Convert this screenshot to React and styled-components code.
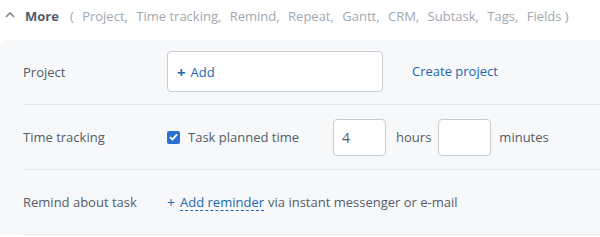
import React from "react";
import styled, { createGlobalStyle } from "styled-components";

const Global = createGlobalStyle`
  html, body { margin: 0; padding: 0; background: #fff; }
  body { font-family: "Open Sans", "Liberation Sans", sans-serif; font-size: 13px; color: #535c69; }
  * { box-sizing: border-box; }
`;

const Wrap = styled.div`
  width: 600px;
  height: 237px;
  overflow: hidden;
`;

const Header = styled.div`
  height: 40px;
  display: flex;
  align-items: center;
  padding-left: 5px;
  padding-bottom: 11px;
  padding-top: 2px;
  white-space: nowrap;
`;

const Chevron = styled.svg`
  width: 10px;
  height: 7px;
  margin-right: 10px;
  margin-top: -2px;
`;

const MoreTitle = styled.span`
  font-weight: 700;
  color: #535c69;
  margin-right: 11px;
`;

const Sections = styled.span`
  color: #a1a8b0;
  display: flex;
`;

const SectionItem = styled.span`
  margin-right: ${(p) => (p.$last ? "0" : "8.4px")};
`;

const Panel = styled.div`
  background: #f7f8f9;
  border-radius: 8px 0 0 0;
  padding-left: 23px;
`;

const Row = styled.div`
  display: grid;
  grid-template-columns: 144px 1fr;
  align-items: center;
  height: 65px;
  border-bottom: 1px solid #e5e7e9;
`;

const Label = styled.div`
  color: #535c69;
`;

const Content = styled.div`
  display: flex;
  align-items: center;
  white-space: nowrap;
`;

const AddBox = styled.div`
  width: 216px;
  height: 41px;
  background: #fff;
  border: 1px solid #c6cdd3;
  border-radius: 4px;
  display: flex;
  align-items: center;
  padding-left: 9px;
  color: #2067b0;
  margin-top: -1px;
`;

const Plus = styled.span`
  font-weight: 700;
  font-size: 15px;
  margin-right: 5px;
  color: #2067b0;
`;

const Link = styled.span`
  color: #2067b0;
  margin-left: ${(p) => p.$ml || 0}px;
  margin-top: -3px;
`;

const CheckBox = styled.span`
  width: 13px;
  height: 13px;
  border-radius: 2px;
  background: #2a72cf;
  display: inline-flex;
  align-items: center;
  justify-content: center;
  margin-right: 8px;
`;

const Text = styled.span`
  color: #535c69;
  margin-right: ${(p) => p.$mr || 0}px;
`;

const NumBox = styled.div`
  width: 53px;
  height: 37px;
  background: #fff;
  border: 1px solid #c6cdd3;
  border-radius: 4px;
  display: flex;
  align-items: center;
  padding-left: 8px;
  font-size: 14px;
  color: #535c69;
  margin-right: ${(p) => p.$mr || 0}px;
`;

const DashedLink = styled.span`
  color: #2067b0;
  border-bottom: 1px dashed #2067b0;
  line-height: 16px;
  margin-right: 4px;
`;

const SmallPlus = styled.span`
  color: #2067b0;
  margin-right: 5px;
  font-size: 14px;
`;

const sections = ["Project,", "Time tracking,", "Remind,", "Repeat,", "Gantt,", "CRM,", "Subtask,", "Tags,", "Fields )"];

export default function App() {
  return (
    <Wrap>
      <Global />
      <Header>
        <Chevron viewBox="0 0 10 7">
          <path d="M1 6 L5 2 L9 6" fill="none" stroke="#80868e" strokeWidth="1.6" />
        </Chevron>
        <MoreTitle>More</MoreTitle>
        <Sections>
          <SectionItem>(</SectionItem>
          {sections.map((s, i) => (
            <SectionItem key={s} $last={i === sections.length - 1}>{s}</SectionItem>
          ))}
        </Sections>
      </Header>
      <Panel>
        <Row>
          <Label>Project</Label>
          <Content>
            <AddBox>
              <Plus>+</Plus>
              <span>Add</span>
            </AddBox>
            <Link $ml={29}>Create project</Link>
          </Content>
        </Row>
        <Row>
          <Label>Time tracking</Label>
          <Content>
            <CheckBox>
              <svg width="9" height="8" viewBox="0 0 9 8">
                <path d="M1 4.2 L3.4 6.4 L8 1.4" fill="none" stroke="#fff" strokeWidth="1.8" />
              </svg>
            </CheckBox>
            <Text $mr={34}>Task planned time</Text>
            <NumBox $mr={10}>4</NumBox>
            <Text $mr={7}>hours</Text>
            <NumBox $mr={8} />
            <Text>minutes</Text>
          </Content>
        </Row>
        <Row>
          <Label>Remind about task</Label>
          <Content>
            <SmallPlus>+</SmallPlus>
            <DashedLink>Add reminder</DashedLink>
            <Text>via instant messenger or e-mail</Text>
          </Content>
        </Row>
      </Panel>
    </Wrap>
  );
}
